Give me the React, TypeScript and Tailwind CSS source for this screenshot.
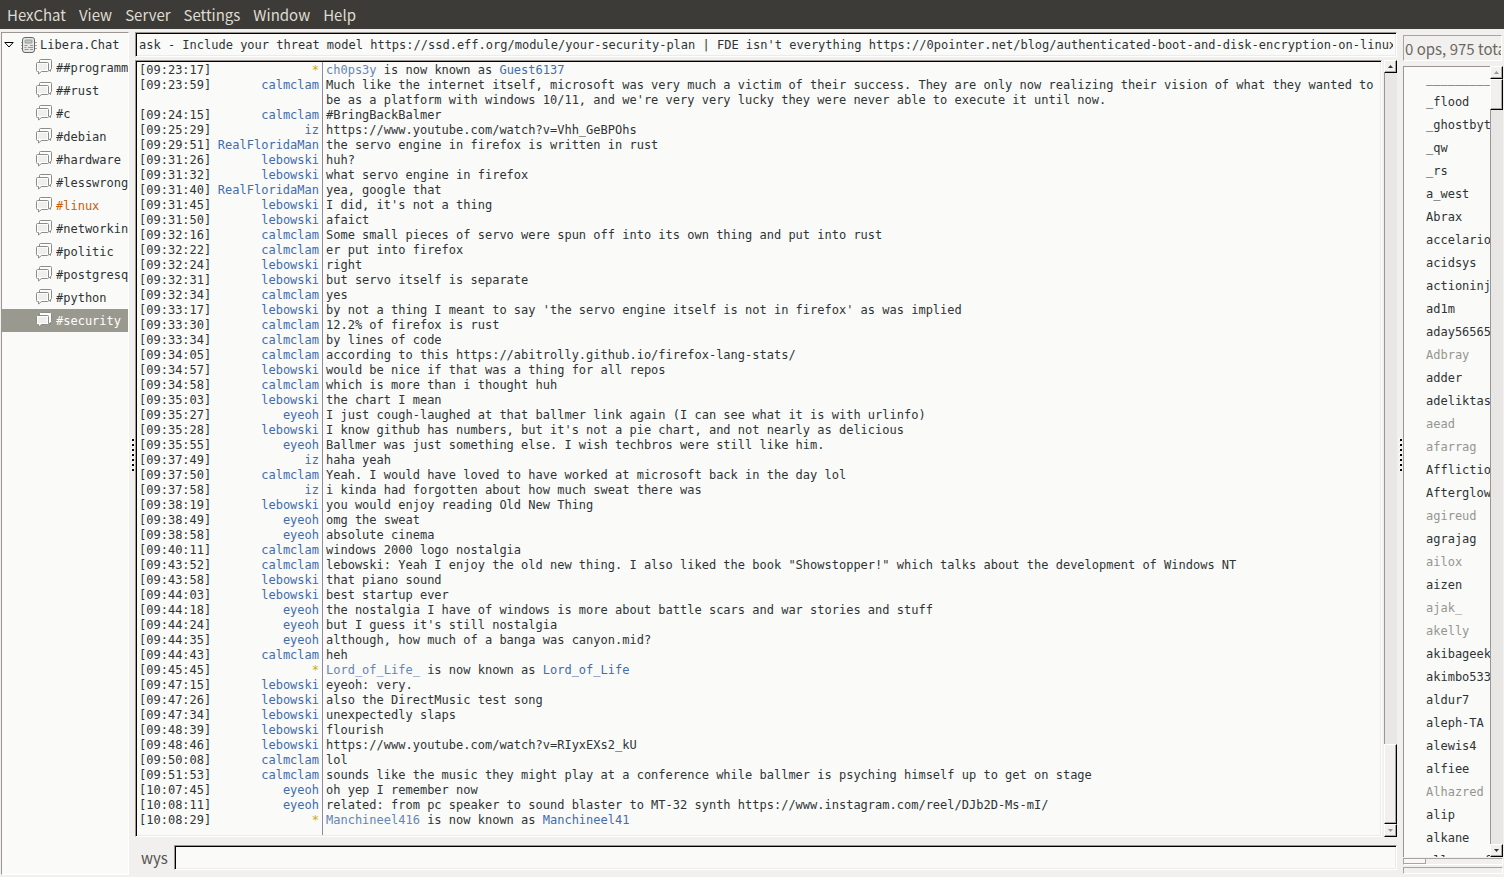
import clsx from "clsx";

type Message = { time: string; nick: string; text: string };
type Rename = { time: string; from: string; to: string };

const menus = ["HexChat", "View", "Server", "Settings", "Window", "Help"];

const channels = [
  "##programming",
  "##rust",
  "#c",
  "#debian",
  "#hardware",
  "#lesswrong",
  "#linux",
  "#networking",
  "#politic",
  "#postgresql",
  "#python",
  "#security",
];

const topic =
  "ask - Include your threat model https://ssd.eff.org/module/your-security-plan | FDE isn't everything https://0pointer.net/blog/authenticated-boot-and-disk-encryption-on-linux.html";

const log: (Message | Rename)[] = [
  { time: "09:23:17", from: "ch0ps3y", to: "Guest6137" },
  {
    time: "09:23:59",
    nick: "calmclam",
    text: "Much like the internet itself, microsoft was very much a victim of their success. They are only now realizing their vision of what they wanted to be as a platform with windows 10/11, and we're very very lucky they were never able to execute it until now.",
  },
  { time: "09:24:15", nick: "calmclam", text: "#BringBackBalmer" },
  { time: "09:25:29", nick: "iz", text: "https://www.youtube.com/watch?v=Vhh_GeBPOhs" },
  { time: "09:29:51", nick: "RealFloridaMan", text: "the servo engine in firefox is written in rust" },
  { time: "09:31:26", nick: "lebowski", text: "huh?" },
  { time: "09:31:32", nick: "lebowski", text: "what servo engine in firefox" },
  { time: "09:31:40", nick: "RealFloridaMan", text: "yea, google that" },
  { time: "09:31:45", nick: "lebowski", text: "I did, it's not a thing" },
  { time: "09:31:50", nick: "lebowski", text: "afaict" },
  { time: "09:32:16", nick: "calmclam", text: "Some small pieces of servo were spun off into its own thing and put into rust" },
  { time: "09:32:22", nick: "calmclam", text: "er put into firefox" },
  { time: "09:32:24", nick: "lebowski", text: "right" },
  { time: "09:32:31", nick: "lebowski", text: "but servo itself is separate" },
  { time: "09:32:34", nick: "calmclam", text: "yes" },
  { time: "09:33:17", nick: "lebowski", text: "by not a thing I meant to say 'the servo engine itself is not in firefox' as was implied" },
  { time: "09:33:30", nick: "calmclam", text: "12.2% of firefox is rust" },
  { time: "09:33:34", nick: "calmclam", text: "by lines of code" },
  { time: "09:34:05", nick: "calmclam", text: "according to this https://abitrolly.github.io/firefox-lang-stats/" },
  { time: "09:34:57", nick: "lebowski", text: "would be nice if that was a thing for all repos" },
  { time: "09:34:58", nick: "calmclam", text: "which is more than i thought huh" },
  { time: "09:35:03", nick: "lebowski", text: "the chart I mean" },
  { time: "09:35:27", nick: "eyeoh", text: "I just cough-laughed at that ballmer link again (I can see what it is with urlinfo)" },
  { time: "09:35:28", nick: "lebowski", text: "I know github has numbers, but it's not a pie chart, and not nearly as delicious" },
  { time: "09:35:55", nick: "eyeoh", text: "Ballmer was just something else. I wish techbros were still like him." },
  { time: "09:37:49", nick: "iz", text: "haha yeah" },
  { time: "09:37:50", nick: "calmclam", text: "Yeah. I would have loved to have worked at microsoft back in the day lol" },
  { time: "09:37:58", nick: "iz", text: "i kinda had forgotten about how much sweat there was" },
  { time: "09:38:19", nick: "lebowski", text: "you would enjoy reading Old New Thing" },
  { time: "09:38:49", nick: "eyeoh", text: "omg the sweat" },
  { time: "09:38:58", nick: "eyeoh", text: "absolute cinema" },
  { time: "09:40:11", nick: "calmclam", text: "windows 2000 logo nostalgia" },
  {
    time: "09:43:52",
    nick: "calmclam",
    text: 'lebowski: Yeah I enjoy the old new thing. I also liked the book "Showstopper!" which talks about the development of Windows NT',
  },
  { time: "09:43:58", nick: "lebowski", text: "that piano sound" },
  { time: "09:44:03", nick: "lebowski", text: "best startup ever" },
  { time: "09:44:18", nick: "eyeoh", text: "the nostalgia I have of windows is more about battle scars and war stories and stuff" },
  { time: "09:44:24", nick: "eyeoh", text: "but I guess it's still nostalgia" },
  { time: "09:44:35", nick: "eyeoh", text: "although, how much of a banga was canyon.mid?" },
  { time: "09:44:43", nick: "calmclam", text: "heh" },
  { time: "09:45:45", from: "Lord_of_Life_", to: "Lord_of_Life" },
  { time: "09:47:15", nick: "lebowski", text: "eyeoh: very." },
  { time: "09:47:26", nick: "lebowski", text: "also the DirectMusic test song" },
  { time: "09:47:34", nick: "lebowski", text: "unexpectedly slaps" },
  { time: "09:48:39", nick: "lebowski", text: "flourish" },
  { time: "09:48:46", nick: "lebowski", text: "https://www.youtube.com/watch?v=RIyxEXs2_kU" },
  { time: "09:50:08", nick: "calmclam", text: "lol" },
  {
    time: "09:51:53",
    nick: "calmclam",
    text: "sounds like the music they might play at a conference while ballmer is psyching himself up to get on stage",
  },
  { time: "10:07:45", nick: "eyeoh", text: "oh yep I remember now" },
  {
    time: "10:08:11",
    nick: "eyeoh",
    text: "related: from pc speaker to sound blaster to MT-32 synth https://www.instagram.com/reel/DJb2D-Ms-mI/",
  },
  { time: "10:08:29", from: "Manchineel416", to: "Manchineel41" },
];

const users = [
  "__________",
  "_flood",
  "_ghostbyte",
  "_qw",
  "_rs",
  "a_west",
  "Abrax",
  "accelario",
  "acidsys",
  "actioninja",
  "ad1m",
  "aday565656",
  "Adbray",
  "adder",
  "adeliktas",
  "aead",
  "afarrag",
  "Affliction",
  "Afterglow",
  "agireud",
  "agrajag",
  "ailox",
  "aizen",
  "ajak_",
  "akelly",
  "akibageek",
  "akimbo5335",
  "aldur7",
  "aleph-TA",
  "alewis4",
  "alfiee",
  "Alhazred",
  "alip",
  "alkane",
  "allocsurf",
];

const away = ["Adbray", "aead", "afarrag", "agireud", "ailox", "ajak_", "akelly", "Alhazred"];

const mono = "font-['DejaVu_Sans_Mono',monospace] text-[12px]";
const sunken = "border border-t-[#9b9692] border-l-[#9b9692] border-r-white border-b-white bg-[#fafaf8]";
const sunkenDark = "shadow-[inset_1px_1px_0_#000,inset_-1px_-1px_0_#edebe9]";
const raised =
  "border border-t-white border-l-white border-r-black border-b-black bg-[#f1f0ee] shadow-[inset_-1px_-1px_0_#a8a4a0]";
const trough = "flex-1 border-l border-[#9b9692] bg-[#e8e7e5]";

function ServerIcon() {
  return (
    <svg width="16" height="16" viewBox="0 0 16 16" className="shrink-0" aria-hidden="true">
      <path d="M0 5.5h16M0 8.500h16M0 11.500h16" stroke="#a5a7a3" />
      <rect x="1.500" y=".5" width="12" height="15" rx="2.500" fill="#e6e7e4" stroke="#666864" />
      <rect x="4" y="3" width="7" height="3" rx=".5" fill="#c4c6c2" stroke="#8b8d89" strokeWidth=".8" />
      <path d="M3.500 8.500h3M9 8.500h3M3.500 10.500h2M7 10.500h5M3.500 12.500h4M9 12.500h3" stroke="#969894" />
    </svg>
  );
}

function ChannelIcon() {
  return (
    <svg width="16" height="17" viewBox="0 0 16 17" className="shrink-0" aria-hidden="true">
      <path
        d="M4.500.500h10q1 0 1 1v8q0 1-1 1v2l-2-2h-8q-1 0-1-1v-8q0-1 1-1z"
        fill="#fdfdfc"
        stroke="#8a8c87"
      />
      <path
        d="M1.500 3.500h10q1 0 1 1v7q0 1-1 1h-6l-3 2.500v-2.500h-1q-1 0-1-1v-7q0-1 1-1z"
        fill="#fdfdfc"
        stroke="#8a8c87"
      />
      <rect x="2" y="5" width="9" height="6" fill="#efefef" />
    </svg>
  );
}

function Arrow({ up, dim }: { up?: boolean; dim?: boolean }) {
  return (
    <svg width="5" height="3" viewBox="0 0 5 3" aria-hidden="true">
      <path d={up ? "M0 3 2.500 0 5 3z" : "M0 0h5L2.500 3z"} fill={dim ? "#9b9692" : "#33322f"} />
    </svg>
  );
}

function ScrollButton({ up, dim }: { up?: boolean; dim?: boolean }) {
  return (
    <button
      aria-label={up ? "Scroll up" : "Scroll down"}
      className={clsx("flex h-[13px] shrink-0 items-center justify-center", raised)}
    >
      <Arrow up={up} dim={dim} />
    </button>
  );
}

function Grip() {
  return (
    <div className="flex w-1.5 shrink-0 flex-col items-end justify-center pr-px">
      <svg width="3" height="33" viewBox="0 0 3 33" aria-hidden="true">
        {[0, 5, 10, 15, 20, 25, 30].map((y) => (
          <g key={y}>
            <path d={`M0 ${y}h2v2h-2z`} fill="#fff" />
            <path d={`M1 ${y + 1}h2v2h-2z`} fill="#000" />
          </g>
        ))}
      </svg>
    </div>
  );
}

function LogLine({ line }: { line: Message | Rename }) {
  return (
    <li className="grid grid-cols-[80px_100px_1fr] pl-0.5">
      <span>[{line.time}]</span>
      {"from" in line ? (
        <span className="text-right text-[#c8ab20]">*</span>
      ) : (
        <span className="flex justify-end text-[#3f6dad]">{line.nick}</span>
      )}
      <p className="ml-[3px] border-l border-[#8d8aa0] pl-[3px]">
        {"from" in line ? (
          <>
            <span className="text-[#6286b4]">{line.from}</span> is now known as{" "}
            <span className="text-[#3f6dad]">{line.to}</span>
          </>
        ) : (
          line.text
        )}
      </p>
    </li>
  );
}

export default function App() {
  return (
    <div className="flex h-screen flex-col overflow-hidden bg-[#f1f0ee] font-['Noto_Sans_CJK_SC',sans-serif] text-[15px] text-[#2e3436]">
      <nav className="flex h-[29px] shrink-0 items-center gap-[13px] bg-[#3c3b37] px-[7px] pt-0.5 text-[#dfdbd2]">
        {menus.map((m) => (
          <button key={m}>{m}</button>
        ))}
      </nav>

      <div className="flex min-h-0 flex-1 pt-[3px]">
        <aside className={clsx("mb-0.5 ml-px w-32 shrink-0 overflow-hidden", sunken, mono)}>
          <div className="flex h-[23px] items-center gap-[3px] pl-0.5">
            <svg width="10" height="6" viewBox="0 0 10 6" className="mr-1 shrink-0" aria-hidden="true">
              <path d="M.8.500h8.400L5 5z" fill="#fff" stroke="#000" />
            </svg>
            <ServerIcon />
            <span>Libera.Chat</span>
          </div>
          <ul>
            {channels.map((c) => (
              <li
                key={c}
                className={clsx(
                  "flex h-[23px] items-center gap-1 pl-[34px] whitespace-nowrap",
                  c === "#linux" && "text-[#ce5c00]",
                  c === "#security" && "bg-[#9a9990] text-white"
                )}
              >
                <ChannelIcon />
                <span className="min-w-0 overflow-hidden">{c}</span>
              </li>
            ))}
          </ul>
        </aside>

        <Grip />

        <main className="flex min-w-0 flex-1 flex-col">
          <input
            aria-label="Topic"
            defaultValue={topic}
            className={clsx("h-[25px] shrink-0 px-[3px] outline-none", sunken, sunkenDark, mono)}
          />
          <div className="mt-[3px] flex min-h-0 flex-1 gap-0.5">
            <div
              className={clsx(
                "flex min-w-0 flex-1 flex-col overflow-hidden pl-px leading-[15px]",
                sunken,
                sunkenDark,
                mono
              )}
            >
              <div className="mt-px ml-[185px] h-px shrink-0 border-l border-[#8d8aa0]" />
              <ol>
                {log.map((line) => (
                  <LogLine key={line.time} line={line} />
                ))}
              </ol>
              <div className="mb-px ml-[185px] flex-1 border-l border-[#8d8aa0]" />
            </div>
            <div className="flex w-[13px] shrink-0 flex-col">
              <ScrollButton up />
              <div className={trough} />
              <div className={clsx("h-20", raised)} />
              <ScrollButton dim />
            </div>
          </div>
          <div className="mt-2 mb-[7px] flex h-[25px] shrink-0 items-center">
            <label htmlFor="message" className="w-[39px] pt-0.5 pl-1.5 text-[#55534e]">
              wys
            </label>
            <input
              id="message"
              className={clsx("h-full min-w-0 flex-1 px-[3px] outline-none", sunken, sunkenDark, mono)}
            />
          </div>
        </main>

        <Grip />

        <aside className="mr-px flex w-[100px] shrink-0 flex-col pt-[3px]">
          <div className="mr-px h-[26px] shrink-0 overflow-hidden border border-[#a8a4a0] border-r-white border-b-white pl-px leading-[26px] whitespace-nowrap text-[#6b6964]">
            0 ops, 975 total
          </div>
          <div className="mt-[5px] flex min-h-0 flex-1">
            <ul
              className={clsx(
                "min-w-0 flex-1 overflow-hidden border-t border-l border-[#9b9692] bg-[#fafaf8] pt-px pl-[22px]",
                mono
              )}
            >
              {users.map((u) => (
                <li
                  key={u}
                  className={clsx("h-[23px] leading-[23px] whitespace-nowrap", away.includes(u) && "text-[#969691]")}
                >
                  {u}
                </li>
              ))}
            </ul>
            <div className="flex w-[13px] shrink-0 flex-col">
              <ScrollButton up dim />
              <div className={clsx("h-[31px]", raised)} />
              <div className={trough} />
              <ScrollButton />
            </div>
          </div>
          <div className="mt-px h-[7px] shrink-0 border border-[#a8a4a0] border-r-white border-b-white">
            <div className="h-full w-[22px] border-r border-b border-[#a8a4a0] bg-[#f8f7f5]" />
          </div>
          <div className="mt-0.5 mb-[3px] h-[7px] shrink-0 border border-[#a8a4a0] border-r-white border-b-white" />
        </aside>
      </div>
    </div>
  );
}
